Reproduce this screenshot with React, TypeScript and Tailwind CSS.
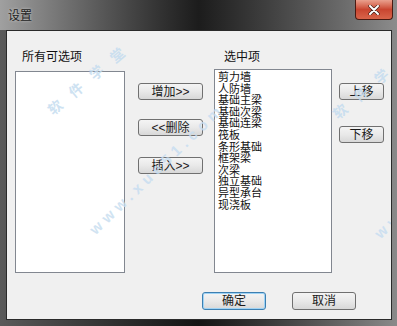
const cjk = { fontFamily: '"Liberation Sans", "Noto Sans CJK SC", sans-serif' }

const selected = [
  '剪力墙',
  '人防墙',
  '基础主梁',
  '基础次梁',
  '基础连梁',
  '筏板',
  '条形基础',
  '框架梁',
  '次梁',
  '独立基础',
  '异型承台',
  '现浇板',
]

const Btn = ({ label, className = '', primary = false }: { label: string; className?: string; primary?: boolean }) => (
  <button
    className={
      'flex items-center justify-center rounded-[3px] border text-[12px] leading-none text-[#1a1a1a] bg-gradient-to-b from-[#f4f4f4] via-[#e9e9e9] to-[#d8d8d8] ' +
      (primary ? 'border-[#3c7fb1] shadow-[inset_0_0_0_1px_#9fd3f5] ' : 'border-[#707070] ') +
      className
    }
  >
    {label}
  </button>
)

// faint site watermark, two copies side by side
const Watermark = ({ dx, dy }: { dx: number; dy: number }) => (
  <>
    <div
      className="absolute pointer-events-none origin-left text-[14px] leading-[20px] font-bold tracking-[13px] text-[#c2dbef] opacity-80 -rotate-[40deg] whitespace-nowrap"
      style={{ left: 43 + dx, top: 71 + dy }}
    >
      软件学堂
    </div>
    <div
      className="absolute pointer-events-none origin-left text-[15px] leading-[20px] font-bold tracking-[5px] text-[#c6ddf0] opacity-80 -rotate-[44deg] whitespace-nowrap"
      style={{ left: 85 + dx, top: 191 + dy }}
    >
      www.xue51.com
    </div>
  </>
)

export default function App() {
  return (
    <div className="w-[397px] h-[326px] flex flex-col bg-gradient-to-r from-[#5a5a5a] via-[#141414] to-[#8a8a8a] overflow-hidden" style={cjk}>
      {/* title bar */}
      <div className="h-[30px] flex justify-between bg-gradient-to-r from-[#a0a0a0] via-[#1c1c1c] to-[#8c8c8c]">
        <div className="pl-[8px] pt-[7px] text-[12px] text-[#222] [text-shadow:0_0_3px_rgba(255,255,255,0.6)]">设置</div>
        <div className="mr-[4px] w-[38px] h-[20px] rounded-b-[4px] border border-t-0 border-[#4a1a12] bg-gradient-to-b from-[#e9a08e] via-[#c94530] to-[#d8644a] flex items-center justify-center">
          <svg width="12" height="10" viewBox="0 0 12 10">
            <path d="M2 1 L10 9 M10 1 L2 9" stroke="#3a1a14" strokeWidth="3.2" strokeLinecap="round" />
            <path d="M2 1 L10 9 M10 1 L2 9" stroke="#ffffff" strokeWidth="2" strokeLinecap="round" />
          </svg>
        </div>
      </div>

      {/* client area */}
      <div className="flex-1 flex pl-[6px] pr-[5px] pb-[6px]">
        <div className="flex-1 relative flex flex-col bg-[#f0f0f0] border border-[#2a2a2a] overflow-hidden">
          <div className="flex pl-[8px]">
            <div className="w-[110px] flex flex-col">
              <div className="mt-[19px] pl-[7px] h-[15px] text-[12px] leading-[15px] text-[#111]">所有可选项</div>
              <div className="mt-[6px] h-[202px] bg-white border border-[#828790]" />
            </div>

            <div className="ml-[13px] w-[65px] flex flex-col">
              <Btn label="增加>>" className="mt-[52px] h-[17px]" />
              <Btn label="<<删除" className="mt-[19px] h-[17px]" />
              <Btn label="插入>>" className="mt-[21px] h-[17px]" />
            </div>

            <div className="ml-[11px] w-[118px] flex flex-col">
              <div className="mt-[19px] pl-[10px] h-[15px] text-[12px] leading-[15px] text-[#111]">选中项</div>
              <div className="mt-[4px] h-[204px] bg-white border border-[#828790] pl-[3px] pt-[2px] flex flex-col">
                {selected.map((s) => (
                  <div key={s} className="text-[11px] leading-[11.6px] text-[#111]">
                    {s}
                  </div>
                ))}
              </div>
            </div>

            <div className="ml-[7px] w-[45px] flex flex-col">
              <Btn label="上移" className="mt-[52px] h-[17px]" />
              <Btn label="下移" className="mt-[26px] h-[17px]" />
            </div>
          </div>

          <div className="flex mt-[19px] pl-[195px] gap-[26px]">
            <Btn label="确定" primary className="w-[64px] h-[18px]" />
            <Btn label="取消" className="w-[64px] h-[18px]" />
          </div>

          <Watermark dx={0} dy={0} />
          <Watermark dx={285} dy={4} />
        </div>
      </div>
    </div>
  )
}
